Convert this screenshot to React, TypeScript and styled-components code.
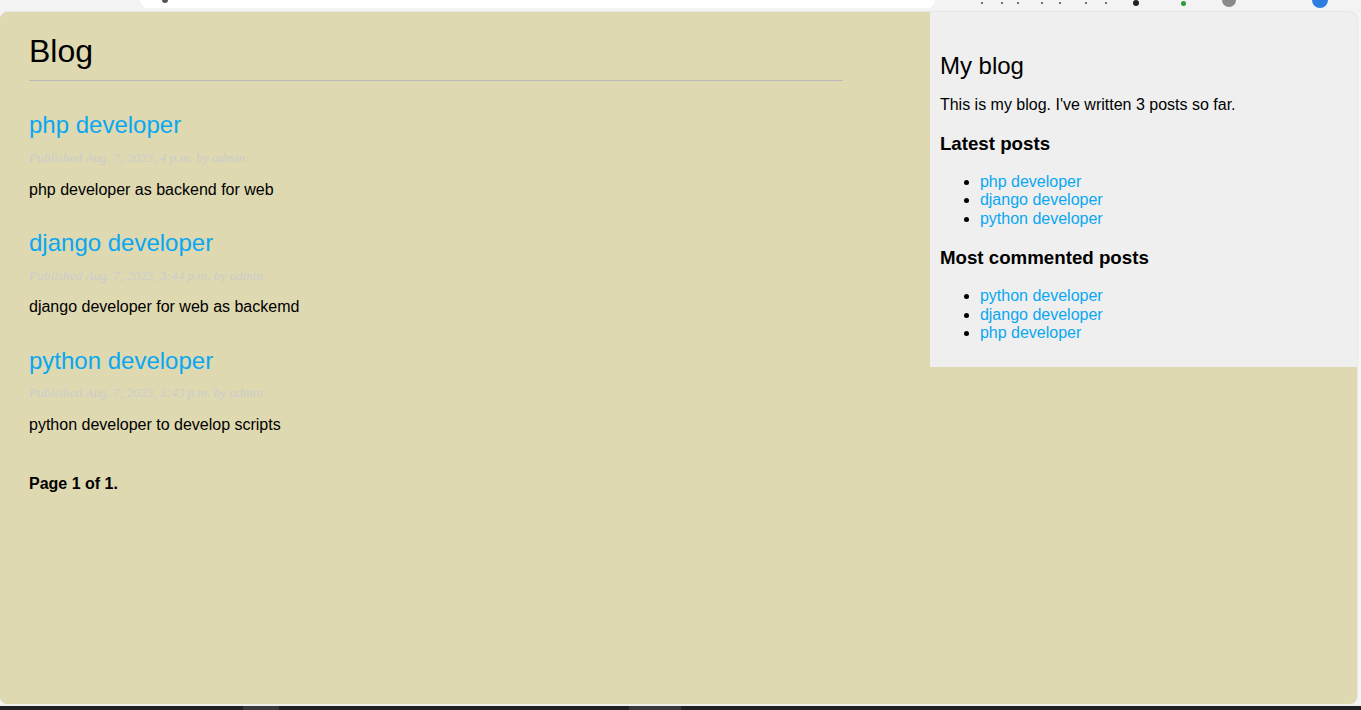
import React from 'react';
import styled, { createGlobalStyle } from 'styled-components';

const Global = createGlobalStyle`
  html, body { margin: 0; padding: 0; }
  body {
    background: #f4f4f4;
    font-family: "Liberation Sans", Arial, Helvetica, sans-serif;
    overflow: hidden;
  }
`;

const Window = styled.div`
  width: 1361px;
  height: 710px;
  display: flex;
  flex-direction: column;
  background: #f5f5f5;
  overflow: hidden;
`;

const ChromeBar = styled.div`
  height: 12px;
  flex: none;
  display: flex;
  align-items: flex-start;
  background: #f3f3f3;
`;

const ChromeSpacer = styled.div<{ $w: number }>`
  width: ${(p) => p.$w}px;
  flex: none;
`;

const AddressBar = styled.div`
  width: 795px;
  height: 8px;
  flex: none;
  background: #ffffff;
  border-radius: 0 0 10px 10px;
  display: flex;
  align-items: flex-start;
  padding-left: 22px;
  box-sizing: border-box;
`;

const Dot = styled.span<{ $c: string; $s: number; $top: number; $ml: number }>`
  display: block;
  flex: none;
  width: ${(p) => p.$s}px;
  height: ${(p) => p.$s}px;
  border-radius: 50%;
  background: ${(p) => p.$c};
  margin-top: ${(p) => p.$top}px;
  margin-left: ${(p) => p.$ml}px;
`;

const Viewport = styled.div`
  height: 692px;
  width: 1357px;
  flex: none;
  background: #ded9b0;
  border-radius: 8px;
  box-shadow: 0 0 2px rgba(0, 0, 0, 0.18);
  display: flex;
  justify-content: space-between;
  align-items: flex-start;
  overflow: hidden;
`;

const Content = styled.main`
  width: 60%;
  padding: 0 0 0 29px;
  flex: none;
`;

const Sidebar = styled.aside`
  width: 30%;
  padding: 10px 10px 9px;
  background: #efefef;
  flex: none;
`;

const PageTitle = styled.h1`
  font-weight: normal;
  font-size: 32px;
  line-height: 36.8px;
  border-bottom: 1px solid #bbb;
  padding: 0 0 10px 0;
  margin: 21.44px 0;
`;

const PostTitle = styled.h2`
  font-weight: normal;
  font-size: 24px;
  line-height: 27.6px;
  margin: 30px 0 0;
`;

const Link = styled.a`
  color: #0aa7f2;
  text-decoration: none;
`;

const DateLine = styled.p`
  color: #ccc;
  font-family: "Liberation Serif", Georgia, "Times New Roman", serif;
  font-size: 13.3px;
  line-height: 13.8px;
  font-style: italic;
  margin: 12px 0;
`;

const Para = styled.p`
  font-size: 16px;
  line-height: 18.4px;
  margin: 16px 0;
  color: #000;
`;

const Pagination = styled.div`
  margin: 40px 0;
  font-weight: bold;
  font-size: 16px;
  line-height: 18.4px;
`;

const SideHeading = styled.h3`
  font-size: 18.72px;
  line-height: 21.5px;
  font-weight: bold;
  margin: 18.72px 0;
`;

const List = styled.ul`
  margin: 16px 0;
  padding-left: 40px;
  font-size: 16px;
  line-height: 18.4px;
`;

const BottomLight = styled.div`
  height: 2px;
  flex: none;
  background: #f0f0f0;
`;

const Taskbar = styled.div`
  height: 4px;
  flex: none;
  background: #202020;
  display: flex;
`;

const TaskItem = styled.div<{ $ml: number; $w: number }>`
  margin-left: ${(p) => p.$ml}px;
  width: ${(p) => p.$w}px;
  background: #3a3a3a;
`;

const posts = [
  { title: 'php developer', date: 'Aug. 7, 2023, 4 p.m.', body: 'php developer as backend for web' },
  { title: 'django developer', date: 'Aug. 7, 2023, 3:44 p.m.', body: 'django developer for web as backemd' },
  { title: 'python developer', date: 'Aug. 7, 2023, 3:43 p.m.', body: 'python developer to develop scripts' },
];

const latest = ['php developer', 'django developer', 'python developer'];
const commented = ['python developer', 'django developer', 'php developer'];

const chromeGlyphs = [46, 18, 14, 22, 16, 24, 18];

export default function App() {
  return (
    <>
      <Global />
      <Window>
        <ChromeBar>
          <ChromeSpacer $w={140} />
          <AddressBar>
            <Dot $c="#555" $s={6} $top={-3} $ml={0} />
          </AddressBar>
          {chromeGlyphs.map((ml, i) => (
            <Dot key={i} $c="#444" $s={2} $top={2} $ml={ml} />
          ))}
          <Dot $c="#222" $s={6} $top={0} $ml={26} />
          <Dot $c="#2e9b3a" $s={5} $top={1} $ml={42} />
          <Dot $c="#8a8a8a" $s={14} $top={-7} $ml={36} />
          <Dot $c="#2f7de1" $s={16} $top={-8} $ml={76} />
        </ChromeBar>
        <Viewport>
          <Content>
            <PageTitle>Blog</PageTitle>
            {posts.map((p) => (
              <React.Fragment key={p.title}>
                <PostTitle>
                  <Link href="#">{p.title}</Link>
                </PostTitle>
                <DateLine>Published {p.date} by admin</DateLine>
                <Para>{p.body}</Para>
              </React.Fragment>
            ))}
            <Pagination>
              <span>Page 1 of 1.</span>
            </Pagination>
          </Content>
          <Sidebar>
            <PostTitle>My blog</PostTitle>
            <Para>This is my blog. I've written 3 posts so far.</Para>
            <SideHeading>Latest posts</SideHeading>
            <List>
              {latest.map((t) => (
                <li key={t}>
                  <Link href="#">{t}</Link>
                </li>
              ))}
            </List>
            <SideHeading>Most commented posts</SideHeading>
            <List>
              {commented.map((t) => (
                <li key={t}>
                  <Link href="#">{t}</Link>
                </li>
              ))}
            </List>
          </Sidebar>
        </Viewport>
        <BottomLight />
        <Taskbar>
          <TaskItem $ml={243} $w={36} />
          <TaskItem $ml={350} $w={52} />
        </Taskbar>
      </Window>
    </>
  );
}
